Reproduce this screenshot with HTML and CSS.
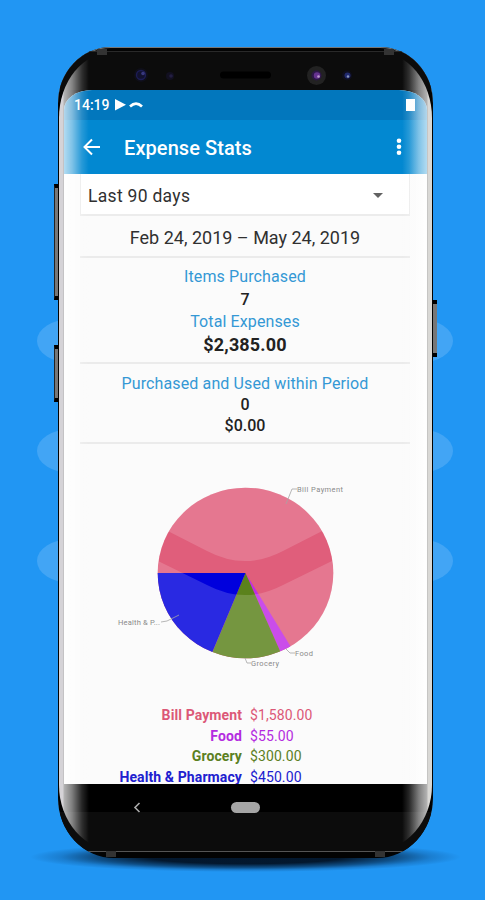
FILE: index.html
```html
<!DOCTYPE html>
<html lang="en">
<head>
    <meta charset="UTF-8">
    <meta name="viewport" content="width=device-width, initial-scale=1.0">
    <title>Expense Stats</title>
    <link rel="stylesheet" href="styles.css">
</head>
<body>
    <div class="blob blob-1"></div>
    <div class="blob blob-2"></div>
    <div class="blob blob-3"></div>
    <div class="side-btn volume"></div>
    <div class="side-btn assistant"></div>
    <div class="side-btn power"></div>

    <div class="phone">
        <div class="bezel-top">
            <svg width="371" height="39" viewBox="60 51 371 39">
                <circle cx="141" cy="74" r="7" fill="#0f0f19"/>
                <circle cx="141" cy="74" r="4.500" fill="#12122e" stroke="#1c1c55" stroke-width="1.400"/>
                <circle cx="143" cy="72.500" r="1.800" fill="#38387c"/>
                <circle cx="170" cy="75" r="4" fill="#121020"/>
                <circle cx="171" cy="75" r="1.800" fill="#231e42"/>
                <rect x="220" y="70.500" width="51" height="7" rx="3.500" fill="#000"/>
                <circle cx="316.500" cy="74.500" r="9.500" fill="#222"/>
                <circle cx="316.500" cy="74.500" r="5" fill="#2c1746"/>
                <circle cx="317" cy="74.500" r="3.200" fill="#65318f"/>
                <circle cx="318.500" cy="75.500" r="1.300" fill="#bd9ace"/>
                <circle cx="347" cy="74.500" r="5" fill="#0e0e1d"/>
                <circle cx="347.500" cy="74.500" r="3" fill="#202a6e"/>
                <circle cx="348" cy="75.500" r="1.200" fill="#8795bd"/>
            </svg>
        </div>

        <div class="screen">
            <div class="status-bar">
                <span class="time">14:19</span>
                <svg class="status-icons" width="32" height="14" viewBox="0 0 32 14">
                    <path d="M1 1L12 6.700L1 12.500z" fill="#fff"/>
                    <path d="M16 8.500Q22 2.500 28 8.500" fill="none" stroke="#fff" stroke-width="2.600"/>
                </svg>
                <span class="battery"></span>
            </div>
            <div class="app-bar">
                <svg class="back" width="18" height="18" viewBox="0 0 18 18">
                    <path d="M17 9H2M9 1.500L1.500 9L9 16.500" fill="none" stroke="#fff" stroke-width="2"/>
                </svg>
                <h1>Expense Stats</h1>
                <svg class="more" width="6" height="18" viewBox="0 0 6 18">
                    <circle cx="3" cy="2.700" r="2.300" fill="#fff"/>
                    <circle cx="3" cy="8.700" r="2.300" fill="#fff"/>
                    <circle cx="3" cy="14.700" r="2.300" fill="#fff"/>
                </svg>
            </div>

            <div class="content">
                <div class="select">
                    <span>Last 90 days</span>
                    <i class="caret"></i>
                </div>
                <div class="range">Feb 24, 2019 – May 24, 2019</div>
                <div class="stats">
                    <div class="label">Items Purchased</div>
                    <div class="value">7</div>
                    <div class="label">Total Expenses</div>
                    <div class="value amount">$2,385.00</div>
                </div>
                <div class="stats period">
                    <div class="label">Purchased and Used within Period</div>
                    <div class="value">0</div>
                    <div class="value">$0.00</div>
                </div>

                <svg class="chart" width="330" height="240" viewBox="80 460 330 240">
                    <defs>
                        <clipPath id="pie"><ellipse cx="245.500" cy="573" rx="87.800" ry="85.300"/></clipPath>
                    </defs>
                    <g clip-path="url(#pie)">
                        <rect x="150" y="480" width="190" height="185" fill="#e05e7b"/>
                        <path d="M245.500 573L337 722L314 728z" fill="#c02ce6"/>
                        <path d="M245.500 573L314.500 729L180 730z" fill="#5b821c"/>
                        <path d="M245.500 573L179.700 730L100 730V573z" fill="#0000dd"/>
                        <!-- light bands over the pie -->
                        <path d="M150 480H340V522L283 551Q245 571 207 551L150 522z" fill="#fff" opacity=".16"/>
                        <path d="M150 557L207 585Q245 605 283 585L340 557V665H150z" fill="#fff" opacity=".16"/>
                    </g>
                    <g fill="none" stroke="#a5a5a5" stroke-width=".8">
                        <path d="M286 504L292 489H297"/>
                        <path d="M161 622L167 621L179 615"/>
                        <path d="M245 658L247 663H251"/>
                        <path d="M286 649L290 653H295"/>
                    </g>
                    <g class="chart-text">
                        <text x="297" y="491.500" textLength="46">Bill Payment</text>
                        <text x="118" y="625" textLength="42">Health &amp; P...</text>
                        <text x="251" y="666" textLength="28">Grocery</text>
                        <text x="295" y="656" textLength="18">Food</text>
                    </g>
                </svg>

                <div class="legend">
                    <div class="row bill"><b>Bill Payment</b><span>$1,580.00</span></div>
                    <div class="row food"><b>Food</b><span>$55.00</span></div>
                    <div class="row grocery"><b>Grocery</b><span>$300.00</span></div>
                    <div class="row health"><b>Health &amp; Pharmacy</b><span>$450.00</span></div>
                </div>
            </div>
        </div>

        <div class="nav-bar">
            <svg width="8" height="11" viewBox="0 0 8 11">
                <path d="M6.500 1L2 5.500L6.500 10" fill="none" stroke="#aaa" stroke-width="1.600"/>
            </svg>
            <span class="home-pill"></span>
        </div>
        <div class="glare"></div>
        <i class="antenna top-left"></i>
        <i class="antenna top-right"></i>
        <i class="antenna bottom-left"></i>
        <i class="antenna bottom-right"></i>
    </div>
    <div class="shadow"></div>
</body>
</html>
```

FILE: styles.css
```css
* {
    margin: 0;
    padding: 0;
    box-sizing: border-box;
}

body {
    position: relative;
    width: 485px;
    height: 900px;
    padding: 47px 0 0 58px;
    background: #2196f3;
    font-family: Roboto, sans-serif;
    overflow: hidden;
}

/* background shapes behind the phone */
.blob {
    position: absolute;
    left: 37px;
    width: 416px;
    height: 44px;
    border-radius: 34px / 22px;
    background: #42a5f5;
}

.blob-1 { top: 319px; }
.blob-2 { top: 429px; }
.blob-3 { top: 539px; }

/* hardware buttons */
.side-btn {
    position: absolute;
    width: 5px;
    background: #777;
    border-top: 4px solid #000;
    border-bottom: 4px solid #000;
    border-left: 1px solid #222;
}

.volume {
    left: 54px;
    top: 184px;
    height: 116px;
}

.assistant {
    left: 54px;
    top: 345px;
    height: 57px;
}

.power {
    left: 432px;
    top: 300px;
    height: 57px;
}

.phone {
    position: relative;
    z-index: 2;
    display: flex;
    flex-direction: column;
    width: 375px;
    height: 811px;
    padding: 4px 2px 6px;
    border-radius: 53px 53px 56px 56px / 56px 56px 60px 60px;
    background: #030303;
    box-shadow: inset 0 1px 0 #777;
    overflow: hidden;
}

.bezel-top {
    height: 39px;
    background: #0c0c0c;
    border-top: 1px solid #292929;
}

.bezel-top svg {
    display: block;
}

.screen {
    height: 694px;
    margin: 0 4px;
    border-radius: 28px 28px 0 0 / 20px 20px 0 0;
    background: #fbfbfb;
    overflow: hidden;
}

.status-bar {
    display: flex;
    align-items: center;
    height: 30px;
    padding: 0 12px 0 10px;
    background: #0277bd;
    color: #fff;
}

.time {
    font-size: 14px;
    font-weight: 500;
}

.status-icons {
    margin-left: 4px;
}

.battery {
    width: 9px;
    height: 12px;
    margin-left: auto;
    background: #fff;
}

.app-bar {
    display: flex;
    align-items: center;
    height: 54px;
    padding: 0 25px 0 19px;
    background: #0288d1;
    color: #fff;
}

.app-bar h1 {
    margin-left: 23px;
    padding-top: 2px;
    font-size: 20px;
    font-weight: 500;
    letter-spacing: 0.08px;
}

.app-bar .more {
    margin-left: auto;
}

.content {
    padding: 0 17px 0 16px;
    color: #303030;
    text-align: center;
}

.select {
    display: flex;
    align-items: center;
    justify-content: space-between;
    height: 42px;
    padding: 3px 26px 0 7px;
    border: 1px solid #ececec;
    border-top: none;
    border-bottom-width: 2px;
    background: #fff;
    font-size: 17.500px;
    letter-spacing: 0.3px;
}

.caret {
    border: 5px solid transparent;
    border-top-color: #626262;
    border-bottom: none;
}

.range {
    height: 42px;
    border-bottom: 2px solid #ebebeb;
    font-size: 18px;
    line-height: 44px;
}

.stats {
    height: 106px;
    padding-top: 8px;
    border-bottom: 2px solid #ebebeb;
    font-size: 16px;
    line-height: 22.500px;
}

.label {
    color: #3498d5;
    letter-spacing: 0.12px;
}

.value {
    color: #222;
    font-weight: 500;
}

.amount {
    font-size: 18px;
    font-weight: 700;
    letter-spacing: 0.15px;
}

.period {
    height: 80px;
    line-height: 21px;
    padding-top: 9px;
}

.chart {
    display: block;
    margin-top: 16px;
}

.chart-text {
    fill: #8a8a8a;
    font-size: 7.500px;
}

.legend {
    margin-top: 5px;
    font-size: 14px;
    line-height: 20.500px;
    letter-spacing: 0.1px;
}

.row {
    display: grid;
    grid-template-columns: 162px 1fr;
    column-gap: 8px;
    text-align: left;
}

.row b {
    text-align: right;
}

.bill { color: #dc5877; }
.food { color: #b42be0; }
.grocery { color: #5b801f; }
.health { color: #2020cf; }

.nav-bar {
    flex: 1;
    display: flex;
    padding: 18px 0 0 73px;
    background: linear-gradient(#000 28px, #0c0c0c 28px);
    border-bottom: 1px solid #555;
}

.home-pill {
    width: 29px;
    height: 11px;
    margin-left: 90px;
    border-radius: 6px;
    background: #a5a5a5;
}

/* curved glass edges */
.glare {
    position: absolute;
    inset: 5px 1px 7px;
    border-radius: 54px 54px 58px 58px / 66px 66px 66px 66px;
    background:
        linear-gradient(90deg, #d5d3d7 4px, rgba(255, 255, 255, 0.7) 5px, rgba(255, 255, 255, 0.5) 13px, rgba(255, 255, 255, 0.15) 23px, transparent 30px),
        linear-gradient(270deg, #d9d8d5 4px, rgba(255, 255, 255, 0.7) 5px, rgba(255, 255, 255, 0.5) 13px, rgba(255, 255, 255, 0.15) 23px, transparent 30px);
}

.antenna {
    position: absolute;
    width: 10px;
    height: 6px;
    background: #333;
}

.top-left { left: 39px; top: 2px; }
.top-right { right: 39px; top: 2px; }
.bottom-left { left: 48px; bottom: 1px; }
.bottom-right { right: 48px; bottom: 1px; }

/* shadow under the phone */
.shadow {
    position: absolute;
    z-index: 1;
    left: 30px;
    top: 842px;
    width: 431px;
    height: 30px;
    background: radial-gradient(closest-side, rgba(0, 10, 25, 0.9) 45%, rgba(0, 20, 45, 0.55) 70%, rgba(0, 30, 70, 0.2) 86%, transparent);
}
```
